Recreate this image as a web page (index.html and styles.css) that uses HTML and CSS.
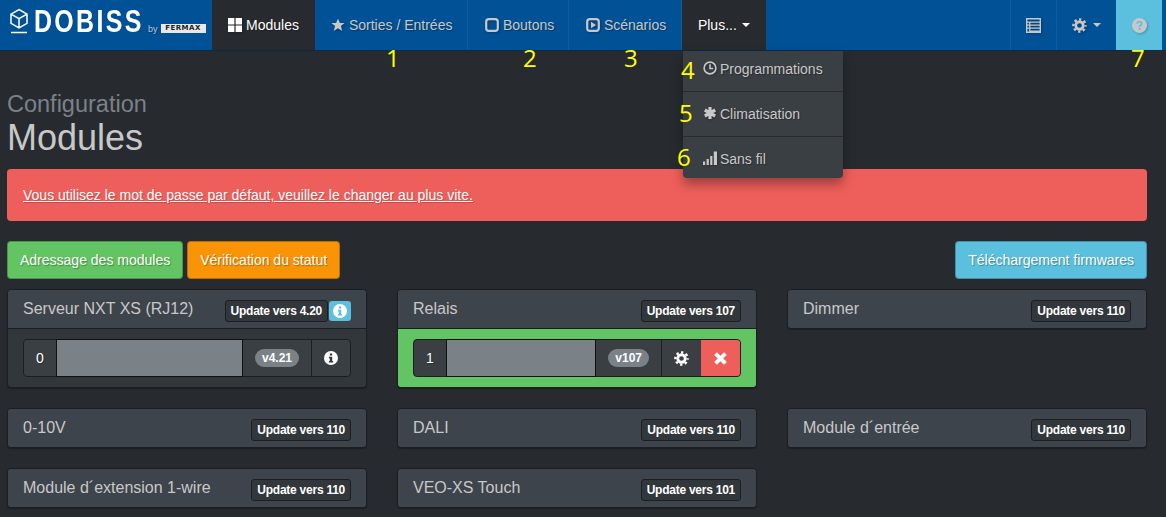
FILE: index.html
```html
<!DOCTYPE html>
<html lang="fr">
<head>
  <meta charset="UTF-8" />
  <title>Dobiss | Modules</title>
  <link rel="stylesheet" href="styles.css">
</head>
<body>

  <svg class="sprites" width="0" height="0">
    <symbol id="i-large" viewBox="0 0 14 14"><path d="M0 0h6.4v6.4H0zM7.6 0H14v6.4H7.6zM0 7.6h6.4V14H0zM7.6 7.6H14V14H7.6z" fill="currentColor"/></symbol>
    <symbol id="i-star" viewBox="0 0 16 16"><path d="M8 .8l2.2 5h5.3l-4.2 3.4 1.6 5.6L8 11.6l-4.9 3.2 1.6-5.6L.5 5.8h5.3z" fill="currentColor"/></symbol>
    <symbol id="i-square" viewBox="0 0 14 14"><rect x="1.2" y="1.2" width="11.6" height="11.6" rx="2.6" fill="none" stroke="currentColor" stroke-width="2.2"/></symbol>
    <symbol id="i-play" viewBox="0 0 14 14"><rect x="1.2" y="1.2" width="11.6" height="11.6" rx="2.6" fill="none" stroke="currentColor" stroke-width="2.2"/><path d="M5 3.8L10 7 5 10.2z" fill="currentColor"/></symbol>
    <symbol id="i-clock" viewBox="0 0 14 14"><circle cx="7" cy="7" r="5.9" fill="none" stroke="currentColor" stroke-width="1.6"/><path d="M7 3.2v4.2h3.2" fill="none" stroke="currentColor" stroke-width="1.5"/></symbol>
    <symbol id="i-asterisk" viewBox="0 0 14 14"><path d="M7 1v12M1.8 4l10.4 6M12.2 4L1.8 10" stroke="currentColor" stroke-width="3.2"/></symbol>
    <symbol id="i-signal" viewBox="0 0 14 14"><path d="M0 10.5h2.2V14H0zM3.6 8h2.2v6H3.6zM7.2 5h2.2v9H7.2zM10.8 0.5H14V14h-3.2z" fill="currentColor"/></symbol>
    <symbol id="i-list" viewBox="0 0 14 14"><path fill-rule="evenodd" d="M0 0h14v14H0zM1.3 1.3v2h11.4v-2zM1.3 4.5v1.6h1.6V4.5zM4.1 4.5v1.6h8.6V4.5zM1.3 7.2v1.6h1.6V7.2zM4.1 7.2v1.6h8.6V7.2zM1.3 10v2.7h1.6V10zM4.1 10v1.6h8.6V10z" fill="currentColor"/></symbol>
    <symbol id="i-cog" viewBox="0 0 16 16"><circle cx="8" cy="8" r="4" fill="none" stroke="currentColor" stroke-width="3"/><circle cx="8" cy="8" r="6.5" fill="none" stroke="currentColor" stroke-width="2.6" stroke-dasharray="2.5 2.6" stroke-dashoffset="1.25"/></symbol>
    <symbol id="i-help" viewBox="0 0 14 14"><circle cx="7" cy="7" r="7" fill="currentColor"/><path d="M4.9 5.4C5 4 5.9 3.5 7 3.5c1.2 0 2.1.7 2.1 1.8 0 1.5-2 1.500-2 3" fill="none" stroke="#5bc0de" stroke-width="1.6"/><rect x="6.2" y="9.3" width="1.8" height="1.7" fill="#5bc0de"/></symbol>
    <symbol id="i-info" viewBox="0 0 14 14"><circle cx="7" cy="7" r="7" fill="#fff"/><path d="M5.8 2.6h2.4v2H5.8zM4.9 5.7h3.3v4.2h.9v1.5H4.9V9.900h.9V7.2h-.9z" fill="#33383d"/></symbol>
    <symbol id="i-info-b" viewBox="0 0 14 14"><circle cx="7" cy="7" r="7" fill="#fff"/><path d="M5.8 2.6h2.4v2H5.8zM4.9 5.7h3.3v4.2h.9v1.5H4.9V9.900h.9V7.2h-.9z" fill="#5bc0de"/></symbol>
    <symbol id="i-remove" viewBox="0 0 14 14"><path d="M2.4 2.4l9.2 9.2M11.6 2.4l-9.2 9.2" stroke="currentColor" stroke-width="3.6"/></symbol>
  </svg>

  <nav class="navbar">
    <a class="brand" href="#">
      <svg class="brand-cube" viewBox="0 0 20 26">
        <path d="M10 1.500l8 4.600v9.300l-8 4.600-8-4.600V6.100zM2 6.100l8 4.600 8-4.600M10 10.700v9.300" fill="none" stroke="#fff" stroke-width="1.500"/>
        <path d="M2 24.500h16" stroke="#fff" stroke-width="1.500"/>
      </svg>
      <span class="brand-name">DOBISS</span>
      <span class="brand-by">by</span>
      <span class="brand-fermax">FERMAX</span>
    </a>

    <ul class="nav">
      <li class="active"><a href="#"><svg class="ico"><use href="#i-large"/></svg>Modules</a></li>
      <li class="nav-sorties"><a href="#"><svg class="ico"><use href="#i-star"/></svg>Sorties / Entrées</a></li>
      <li class="nav-boutons"><a href="#"><svg class="ico"><use href="#i-square"/></svg>Boutons</a></li>
      <li class="nav-scenarios"><a href="#"><svg class="ico"><use href="#i-play"/></svg>Scénarios</a></li>
      <li class="active dropdown">
        <a href="#">Plus... <span class="caret"></span></a>
        <ul class="dropdown-menu">
          <li><a href="#"><svg class="ico"><use href="#i-clock"/></svg>Programmations</a></li>
          <li><a href="#"><svg class="ico"><use href="#i-asterisk"/></svg>Climatisation</a></li>
          <li><a href="#"><svg class="ico"><use href="#i-signal"/></svg>Sans fil</a></li>
        </ul>
      </li>
    </ul>

    <ul class="nav nav-right">
      <li class="nav-list"><a href="#"><svg class="ico ico-solo"><use href="#i-list"/></svg></a></li>
      <li class="nav-cog"><a href="#"><svg class="ico ico-cog"><use href="#i-cog"/></svg> <span class="caret"></span></a></li>
      <li class="help"><a href="#"><svg class="ico ico-solo"><use href="#i-help"/></svg></a></li>
    </ul>
  </nav>

  <!-- numeros ajoutes sur la capture -->
  <span class="mark mark-1">1</span>
  <span class="mark mark-2">2</span>
  <span class="mark mark-3">3</span>
  <span class="mark mark-4">4</span>
  <span class="mark mark-5">5</span>
  <span class="mark mark-6">6</span>
  <span class="mark mark-7">7</span>

  <main class="page">
    <h3 class="subtitle">Configuration</h3>
    <h1 class="title">Modules</h1>

    <div class="alert"><a href="#">Vous utilisez le mot de passe par défaut, veuillez le changer au plus vite.</a></div>

    <div class="actions">
      <a class="btn btn-success" href="#">Adressage des modules</a>
      <a class="btn btn-warning" href="#">Vérification du statut</a>
      <a class="btn btn-info" href="#">Téléchargement firmwares</a>
    </div>

    <div class="panels">
      <section class="panel">
        <header class="panel-head">
          <span class="panel-title">Serveur NXT XS (RJ12)</span>
          <span class="update">Update vers 4.20</span>
          <span class="update-info"><svg class="ico-info"><use href="#i-info-b"/></svg></span>
        </header>
        <div class="panel-body">
          <div class="group">
            <span class="cell cell-num">0</span>
            <span class="cell-name"></span>
            <span class="cell cell-ver"><span class="badge">v4.21</span></span>
            <span class="cell cell-btn cell-info"><svg class="ico-info"><use href="#i-info"/></svg></span>
          </div>
        </div>
      </section>

      <section class="panel">
        <header class="panel-head">
          <span class="panel-title">Relais</span>
          <span class="update">Update vers 107</span>
        </header>
        <div class="panel-body panel-body-ok">
          <div class="group">
            <span class="cell cell-num">1</span>
            <span class="cell-name"></span>
            <span class="cell cell-ver"><span class="badge">v107</span></span>
            <span class="cell cell-btn"><svg class="ico-cell"><use href="#i-cog"/></svg></span>
            <span class="cell cell-del"><svg class="ico-cell"><use href="#i-remove"/></svg></span>
          </div>
        </div>
      </section>

      <section class="panel">
        <header class="panel-head">
          <span class="panel-title">Dimmer</span>
          <span class="update">Update vers 110</span>
        </header>
      </section>

      <section class="panel">
        <header class="panel-head">
          <span class="panel-title">0-10V</span>
          <span class="update">Update vers 110</span>
        </header>
      </section>

      <section class="panel">
        <header class="panel-head">
          <span class="panel-title">DALI</span>
          <span class="update">Update vers 110</span>
        </header>
      </section>

      <section class="panel">
        <header class="panel-head">
          <span class="panel-title">Module d´entrée</span>
          <span class="update">Update vers 110</span>
        </header>
      </section>

      <section class="panel">
        <header class="panel-head">
          <span class="panel-title">Module d´extension 1-wire</span>
          <span class="update">Update vers 110</span>
        </header>
      </section>

      <section class="panel">
        <header class="panel-head">
          <span class="panel-title">VEO-XS Touch</span>
          <span class="update">Update vers 101</span>
        </header>
      </section>
    </div>
  </main>

</body>
</html>
```

FILE: styles.css
```css
* {
  box-sizing: border-box;
  margin: 0;
  padding: 0;
}

html,
body {
  height: 517px;
  overflow: hidden;
}

body {
  background: #272b30;
  color: #c8c8c8;
  font-family: 'Liberation Sans', Arial, sans-serif;
  font-size: 14px;
  line-height: 20px;
  position: relative;
}

a {
  text-decoration: none;
  color: inherit;
}

ul {
  list-style: none;
}

.sprites {
  position: absolute;
}

/* navbar */
.navbar {
  display: flex;
  height: 51px;
  background: #005195;
  border-bottom: 1px solid #0b2a45;
  text-shadow: 1px 1px 1px rgba(0,0,0,0.3);
}

.brand {
  width: 212px;
  flex: none;
  display: flex;
  align-items: center;
  padding-left: 9px;
  color: #fff;
}

.brand-cube {
  width: 20px;
  height: 26px;
  margin-bottom: 8px;
  flex: none;
}

.brand-name {
  flex: none;
  width: 108px;
  font-weight: bold;
  font-size: 32px;
  letter-spacing: 3px;
  margin-left: 5px;
  margin-bottom: 9px;
  transform: scaleX(0.78);
  transform-origin: left center;
  text-shadow: none;
}

.brand-by {
  font-size: 9px;
  color: #b7c9da;
  margin-left: 6px;
  margin-top: 8px;
  flex: none;
}

.brand-fermax {
  flex: none;
  background: #e8e8e8;
  color: #1d1d1d;
  font-family: 'DejaVu Sans', sans-serif;
  font-weight: bold;
  font-size: 7px;
  line-height: 9px;
  height: 9px;
  width: 45px;
  margin-left: 3px;
  margin-top: 7px;
  text-align: center;
  letter-spacing: 0.5px;
  text-shadow: none;
  overflow: hidden;
}

.nav {
  display: flex;
}

.nav > li {
  position: relative;
  border-right: 1px solid #0f5c9c;
}

.nav > li > a {
  display: flex;
  align-items: center;
  height: 50px;
  padding: 0 16px;
  color: #c8c8c8;
  white-space: nowrap;
}

.nav > li.active {
  background: #272b30;
  border-right: 0;
}

.nav > li.active > a {
  color: #fff;
}

.nav > li.dropdown > a {
  width: 84px;
}

.nav > li.nav-sorties {
  width: 153px;
}

.nav > li.nav-boutons {
  width: 101px;
}

.nav > li.nav-scenarios {
  width: 113px;
}

.nav > li.nav-boutons > a {
  padding-left: 17px;
}

.nav > li.nav-scenarios > a {
  padding-left: 17px;
}

.nav-right {
  margin-left: auto;
  margin-right: 4px;
}

.nav-right > li {
  border-right: 0;
  border-left: 1px solid #0f5c9c;
}

.nav-right > li > a {
  padding: 0;
  justify-content: center;
}

.nav > li.nav-list,
.nav > li.help {
  width: 46px;
}

.nav > li.nav-cog {
  width: 60px;
}

.nav-right > li.help {
  background: #5bc0de;
  border-left: 0;
}

.ico {
  width: 14px;
  height: 14px;
  margin-right: 4px;
  flex: none;
  filter: drop-shadow(1px 1px 1px rgba(0,0,0,0.25));
}

.ico-solo {
  margin-right: 0;
  width: 15px;
  height: 15px;
}

.ico-cog {
  width: 15px;
  height: 15px;
  margin-right: 1px;
}

.caret {
  display: inline-block;
  width: 0;
  height: 0;
  margin-left: 5px;
  border-top: 4px solid currentColor;
  border-left: 4px solid transparent;
  border-right: 4px solid transparent;
}

.dropdown-menu {
  position: absolute;
  z-index: 5;
  top: 51px;
  left: 1px;
  width: 160px;
  background: #3a3f44;
  border-radius: 0 0 4px 4px;
  box-shadow: 0 6px 12px rgba(0,0,0,0.35);
  text-shadow: 1px 1px 1px rgba(0,0,0,0.3);
}

.dropdown-menu li {
  height: 45px;
  border-bottom: 1px solid #272b30;
}

.dropdown-menu li:first-child {
  height: 41px;
}

.dropdown-menu li:last-child {
  border-bottom: 0;
  height: 41px;
}

.dropdown-menu a {
  display: flex;
  align-items: center;
  height: 35px;
  padding-left: 20px;
  color: #c8c8c8;
  font-size: 14px;
}

.dropdown-menu li:nth-child(n+2) a {
  height: 44px;
}

.dropdown-menu .ico {
  margin-right: 3px;
  margin-top: -2px;
}

/* chiffres jaunes */
.mark {
  position: absolute;
  z-index: 10;
  color: #ffff00;
  font-family: 'Open Sans', sans-serif;
  font-size: 24px;
  line-height: 30px;
}

.mark-1 { left: 386px; top: 43px; }
.mark-2 { left: 523px; top: 43px; }
.mark-3 { left: 624px; top: 43px; }
.mark-4 { left: 681px; top: 55px; }
.mark-5 { left: 679px; top: 98px; }
.mark-6 { left: 677px; top: 142px; }
.mark-7 { left: 1131px; top: 43px; }

/* page */
.page {
  padding: 0 19px 0 7px;
}

.subtitle {
  font-size: 23.5px;
  font-weight: normal;
  line-height: 24px;
  color: #7a8288;
  margin-top: 41px;
}

.title {
  font-size: 36px;
  font-weight: normal;
  line-height: 40px;
  color: #c8c8c8;
  margin-top: 2px;
}

.alert {
  background: #ee5f5b;
  color: #fff;
  height: 52px;
  margin-top: 11px;
  padding: 16px;
  border-radius: 4px;
  text-shadow: 1px 1px 1px rgba(0,0,0,0.2);
}

.alert a {
  text-decoration: underline;
}

.actions {
  display: flex;
  gap: 4px;
  margin-top: 20px;
}

.btn {
  display: block;
  height: 38px;
  padding: 8px 12px;
  border-radius: 4px;
  border: 1px solid rgba(0,0,0,0.25);
  color: #fff;
  text-shadow: 1px 1px 1px rgba(0,0,0,0.3);
}

.btn-success { background: #62c462; }
.btn-warning { background: #f89406; }
.btn-info {
  background: #5bc0de;
  margin-left: auto;
}

.panels {
  display: grid;
  grid-template-columns: repeat(3, 360px);
  column-gap: 30px;
  row-gap: 20px;
  align-items: start;
  margin-top: 10px;
}

.panel {
  background: #32373c;
  border: 1px solid #1c1e22;
  border-radius: 4px;
  box-shadow: 0 1px 1px rgba(0,0,0,0.3);
  overflow: hidden;
}

.panel-head {
  display: flex;
  align-items: center;
  height: 38px;
  padding: 0 15px;
  background: #3e444c;
}

.panel-title {
  font-size: 16px;
  line-height: 20px;
  color: #c8c8c8;
  margin-right: auto;
}

.update {
  display: block;
  font-size: 12px;
  font-weight: bold;
  letter-spacing: -0.25px;
  line-height: 20px;
  height: 22px;
  padding: 0 5px;
  color: #fff;
  background: #32373c;
  border: 1px solid #1c1e22;
  border-radius: 3px;
  margin-top: 3px;
}

.update-info {
  display: flex;
  align-items: center;
  justify-content: center;
  width: 22px;
  height: 20px;
  margin: 4px 0 0 1px;
  background: #5bc0de;
  border-radius: 3px;
}

.ico-info {
  width: 14px;
  height: 14px;
  display: block;
}

.panel-body {
  padding: 10px 15px;
  border-top: 1px solid #1c1e22;
}

.panel-body-ok {
  background: #62c462;
}

.group {
  display: flex;
  height: 38px;
  background: #3a3f44;
  border: 1px solid #1c1e22;
  border-radius: 4px;
}

.cell {
  display: flex;
  align-items: center;
  justify-content: center;
  color: #fff;
  font-size: 14px;
  flex: none;
}

.cell-num {
  width: 32px;
  text-shadow: 1px 1px 1px rgba(0,0,0,0.3);
}

.cell-name {
  flex: 1;
  margin: -1px 0;
  background: #7a8288;
  border: 1px solid #111;
}

.cell-ver {
  padding: 0 12px;
}

.cell-btn {
  width: 40px;
  border-left: 1px solid #1c1e22;
}

.cell-info {
  width: 39px;
}

.cell-del {
  width: 39px;
  background: #ee5f5b;
  border-radius: 0 3px 3px 0;
}

.badge {
  display: block;
  background: #7a8288;
  color: #fff;
  font-size: 12px;
  font-weight: bold;
  line-height: 18px;
  padding: 0 7px;
  border-radius: 9px;
}

.ico-cell {
  width: 15px;
  height: 15px;
  display: block;
}
```
